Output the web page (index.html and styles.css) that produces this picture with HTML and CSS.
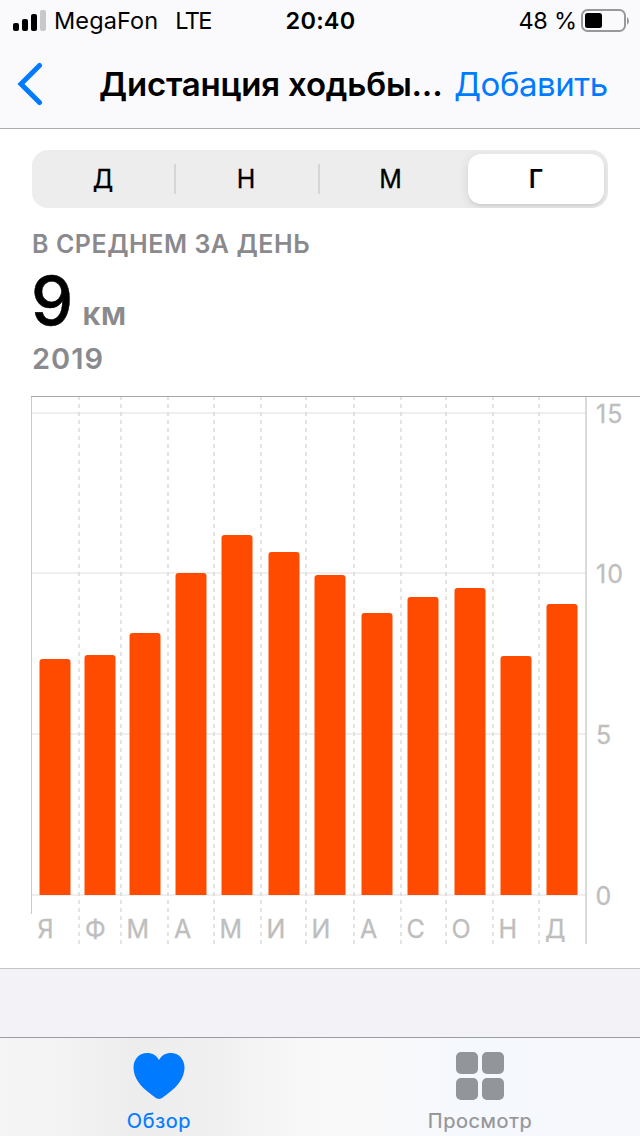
FILE: index.html
```html
<!DOCTYPE html>
<html lang="ru">
<head>
<meta charset="utf-8">
<title>Дистанция ходьбы</title>
<link rel="stylesheet" href="styles.css">
</head>
<body>
<div class="screen">
  <header class="header">
    <div class="status">
      <div class="status-left">
        <svg class="signal" width="34" height="22" viewBox="0 0 34 22"><rect x="0" y="13" width="6" height="8" rx="2"/><rect x="9" y="9" width="6" height="12" rx="2"/><rect x="18" y="4" width="6" height="17" rx="2"/><rect class="weak" x="27" y="0" width="6" height="21" rx="2"/></svg>
        <span class="carrier">MegaFon</span>
        <span class="network">LTE</span>
      </div>
      <div class="clock">20:40</div>
      <div class="status-right">
        <span class="percent">48 %</span>
        <svg class="battery" width="49" height="24" viewBox="0 0 49 24"><rect x="1" y="1" width="43" height="21" rx="5.5" fill="none" stroke="#98989a" stroke-width="2"/><rect x="4" y="4" width="17" height="15" rx="2.5"/><path d="M46 8q2 1.500 2 4t-2 4z" fill="#98989a"/></svg>
      </div>
    </div>
    <nav class="navbar">
      <svg class="back" width="26" height="44" viewBox="0 0 26 44"><path d="M22.500 3.500 4 22 22.500 40.500" fill="none" stroke="#007aff" stroke-width="5" stroke-linecap="round"/></svg>
      <h1 class="title">Дистанция ходьбы...</h1>
      <a class="add">Добавить</a>
    </nav>
  </header>
  <main class="panel">
    <div class="segments">
      <div class="segment">Д</div><div class="segment divided">Н</div><div class="segment divided">М</div><div class="segment selected">Г</div>
    </div>
    <div class="caption">В СРЕДНЕМ ЗА ДЕНЬ</div>
    <div class="value"><span class="number">9</span><span class="unit">км</span></div>
    <div class="year">2019</div>
    <svg class="chart" width="640" height="550" viewBox="0 395 640 550">
      <g class="grid"><path d="M32 413H586M32 573H586M32 734H586M32 895H586"/></g>
      <path class="dashes" d="M79 396V944M121 396V944M168 396V944M214 396V944M261 396V944M306 396V944M354 396V944M401 396V944M446 396V944M493 396V944M539 396V944"/>
      <path class="right-edge" d="M586 397V944"/>
      <path class="left-edge" d="M31.500 397V914"/>
      <path class="top-edge" d="M31 396.500H640"/>
      <g class="bars">
        <path d="M39.500 895V662q0-3 3-3h25q3 0 3 3V895z"/>
        <path d="M84.500 895V658q0-3 3-3h25q3 0 3 3V895z"/>
        <path d="M129.500 895V636q0-3 3-3h25q3 0 3 3V895z"/>
        <path d="M175.500 895V576q0-3 3-3h25q3 0 3 3V895z"/>
        <path d="M221.500 895V538q0-3 3-3h25q3 0 3 3V895z"/>
        <path d="M268.500 895V555q0-3 3-3h25q3 0 3 3V895z"/>
        <path d="M314.500 895V578q0-3 3-3h25q3 0 3 3V895z"/>
        <path d="M361.500 895V616q0-3 3-3h25q3 0 3 3V895z"/>
        <path d="M407.500 895V600q0-3 3-3h25q3 0 3 3V895z"/>
        <path d="M454.500 895V591q0-3 3-3h25q3 0 3 3V895z"/>
        <path d="M500.500 895V659q0-3 3-3h25q3 0 3 3V895z"/>
        <path d="M546.500 895V607q0-3 3-3h25q3 0 3 3V895z"/>
      </g>
      <g class="labels">
        <text x="37.500" y="938">Я</text><text x="85" y="938">Ф</text><text x="126.500" y="938">М</text><text x="174" y="938">А</text><text x="219.500" y="938">М</text><text x="266.500" y="938">И</text><text x="311.500" y="938">И</text><text x="360" y="938">А</text><text x="406.500" y="938">С</text><text x="451.500" y="938">О</text><text x="498.500" y="938">Н</text><text x="545" y="938">Д</text>
        <g class="scale"><text x="596" y="423">15</text><text x="596" y="583">10</text><text x="596" y="744">5</text><text x="595.500" y="905">0</text></g>
      </g>
    </svg>
  </main>
  <footer class="tabs">
    <div class="tab active">
      <svg width="52" height="48" viewBox="0 0 52 48"><path d="M26 47C23.500 47 20.500 44 17 41.500C7.500 34.500.500 26 .500 15.500C.500 7 6.500 1 14 1C19.500 1 23.500 3.500 26 8C28.500 3.500 32.500 1 38 1C45.500 1 51.500 7 51.500 15.500C51.500 26 44.500 34.500 35 41.500C31.500 44 28.500 47 26 47Z"/></svg>
      <span>Обзор</span>
    </div>
    <div class="tab">
      <svg width="48" height="48" viewBox="0 0 48 48"><rect width="22" height="22" rx="5"/><rect x="26" width="22" height="22" rx="5"/><rect y="26" width="22" height="22" rx="5"/><rect x="26" y="26" width="22" height="22" rx="5"/></svg>
      <span class="browse">Просмотр</span>
    </div>
  </footer>
</div>
</body>
</html>
```
FILE: styles.css
```css
* { box-sizing: border-box; }
body { margin: 0; font-family: Inter, "Liberation Sans", sans-serif; color: #000; }
svg { display: block; flex: none; }
.screen { width: 640px; height: 1136px; display: flex; flex-direction: column; background: #f2f2f7; overflow: hidden; white-space: nowrap; }
.header { height: 129px; background: #fafafc; border-bottom: 1px solid #acacae; }
.status { height: 40px; display: grid; grid-template-columns: 1fr auto 1fr; align-items: center; padding: 0 10px 0 13px; font-size: 23.5px; line-height: 42px; }
.status-left, .status-right { display: flex; align-items: center; }
.status-right { justify-content: flex-end; }
.weak { fill: #c8c8ca; }
.signal { margin-right: 7px; }
.battery { margin-bottom: 1px; }
.carrier { letter-spacing: .1px; margin-right: 17px; }
.network { letter-spacing: -1.5px; }
.clock { font-weight: 600; letter-spacing: .2px; margin-right: 2px; }
.percent { margin-right: 4px; letter-spacing: -.2px; }
.navbar { height: 88px; display: flex; align-items: center; padding-left: 17px; font-size: 33px; letter-spacing: -.45px; }
.title { margin: 0 0 0 56px; width: 355px; font-size: 33px; font-weight: 600; letter-spacing: -.2px; }
.add { color: #007aff; }
.panel { height: 840px; display: flex; flex-direction: column; background: #fff; border-bottom: 1px solid #c3c3c8; padding-top: 21px; }
.segments { margin: 0 32px; height: 58px; flex: none; display: grid; grid-template-columns: 142px 144px 145px 1fr; border-radius: 16px; background: #ededed; overflow: hidden; padding-right: 4px; }
.segment { font-size: 25px; font-weight: 400; display: flex; align-items: center; justify-content: center; padding-bottom: 0; -webkit-text-stroke: .3px; }
.divided { background: linear-gradient(#d5d5d7, #d5d5d7) 0 50% / 2px 30px no-repeat; }
.selected { margin: 4px 0 4px 5px; background: #fff; border-radius: 13px; box-shadow: 0 3px 12px #0000001c, 0 2px 2px #0000000d; font-weight: 600; -webkit-text-stroke: 0; }
.caption { margin: 21px 0 0 32px; height: 30px; line-height: 31px; font-size: 25px; font-weight: 600; letter-spacing: .55px; color: #8a8a8e; }
.value { display: flex; align-items: baseline; margin-left: 31px; height: 80px; line-height: 83px; }
.number { font-size: 67px; font-weight: 500; -webkit-text-stroke: .5px; }
.unit { font-size: 32px; font-weight: 600; letter-spacing: .4px; color: #8a8a8e; margin-left: 9px; }
.year { margin-left: 32px; height: 36px; line-height: 39px; font-size: 29px; font-weight: 600; letter-spacing: 1px; color: #8a8a8e; }
.chart { margin-top: 20px; }
.grid { stroke: #efefef; stroke-width: 2; }
.dashes { stroke: #dadadc; stroke-width: 1.5; stroke-dasharray: 4 4; }
.right-edge { stroke: #dadada; stroke-width: 2; }
.left-edge { stroke: #cacaca; }
.top-edge { stroke: #a7a7a7; }
.bars { fill: #ff4b00; }
.labels { fill: #bebebe; stroke: #bebebe; stroke-width: .3px; font-size: 25px; font-weight: 400; }
.scale { letter-spacing: 1.2px; }
.tabs { margin-top: auto; height: 99px; border-top: 1px solid #9c9ca0; display: grid; grid-template-columns: 1fr 1fr; background: linear-gradient(90deg, #f5f5f6 0, #f3f3f3 60px, #ededed 140px, #f0f0f0 220px, #f8f8f8 300px, #f9f9fa 370px, #f5f8fd 470px, #f7f8fc 640px); }
.tab { display: flex; flex-direction: column; align-items: center; padding-top: 14px; font-size: 20px; line-height: 24px; letter-spacing: .6px; color: #949497; fill: #92969b; }
.tab span { margin-top: 9px; -webkit-text-stroke: .2px; }
.active { color: #007aff; fill: #007aff; padding-right: 2px; }
```
